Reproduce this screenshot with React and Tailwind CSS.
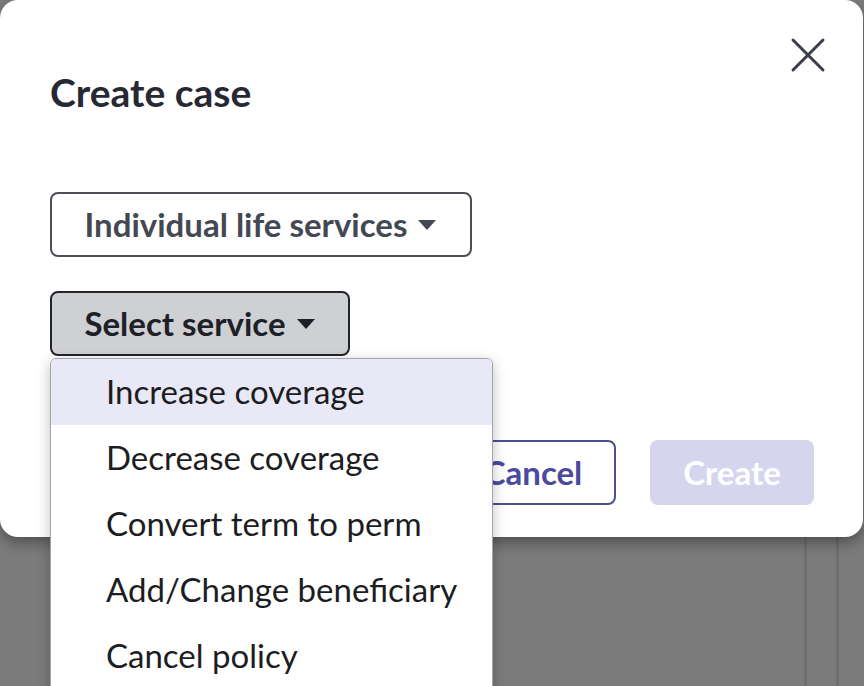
import React from "react";

function Caret({ className }) {
  return (
    <svg width="20" height="12" viewBox="0 0 20 12" className={className}>
      <path d="M1 1 L19 1 L10 11 Z" fill="currentColor" />
    </svg>
  );
}

export default function App() {
  const items = [
    "Increase coverage",
    "Decrease coverage",
    "Convert term to perm",
    "Add/Change beneficiary",
    "Cancel policy",
  ];
  return (
    <div
      className="relative w-[864px] h-[686px] overflow-hidden bg-[#7b7b7b]"
      style={{ fontFamily: "Lato, 'Open Sans', sans-serif" }}
    >
      {/* background panel lines */}
      <div className="absolute left-[804px] top-0 h-full w-[3px] bg-[#6e6e6e]" />
      <div className="absolute left-[836px] top-0 h-full w-[3px] bg-[#6e6e6e]" />

      {/* dialog */}
      <div className="relative w-[863px] h-[537px] bg-white rounded-[18px] shadow-[0_6px_14px_rgba(0,0,0,0.35)] px-[50px] pt-[66px]">
        <button className="absolute left-[790px] top-[37px] w-[36px] h-[36px] text-[#3a3d45]">
          <svg viewBox="0 0 36 36" width="36" height="36">
            <path d="M3 3 L33 33 M33 3 L3 33" stroke="currentColor" strokeWidth="3" strokeLinecap="round" />
          </svg>
        </button>
        <h1 className="text-[39px] leading-[52px] font-bold text-[#262833]">
          Create case
        </h1>
        <div className="mt-[74px] flex">
          <button className="h-[65px] w-[422px] flex items-center justify-center gap-[10px] border-2 border-[#4b4f57] rounded-[8px] text-[33px] font-bold text-[#434853]">
            <span>Individual life services</span>
            <Caret className="text-[#434853]" />
          </button>
        </div>
        <div className="mt-[34px] flex">
          <button className="h-[65px] w-[300px] flex items-center justify-center gap-[10px] border-2 border-[#23252b] rounded-[8px] bg-[#cfd0d4] text-[33px] font-bold text-[#1e2027]">
            <span>Select service</span>
            <Caret className="text-[#1e2027]" />
          </button>
        </div>
        <div className="mt-[84px] flex justify-end gap-[34px] mr-[-1px]">
          <button className="h-[65px] w-[166px] border-2 border-[#4d4f8c] rounded-[8px] text-[33px] font-bold text-[#4a4aa0]">
            Cancel
          </button>
          <button className="h-[65px] w-[164px] rounded-[8px] bg-[#d6d5ee] text-[33px] font-bold text-white">
            Create
          </button>
        </div>
      </div>

      {/* dropdown menu */}
      <div className="absolute left-[50px] top-[358px] w-[443px] h-[340px] bg-white border border-[#a3a5ad] rounded-t-[6px] shadow-[0_4px_14px_rgba(0,0,0,0.25)] overflow-hidden">
        {items.map((it, i) => (
          <div
            key={it}
            className={
              "h-[66px] flex items-center pl-[55px] text-[33px] text-[#1c1d22] " +
              (i === 0 ? "bg-[#e9e8f7]" : "")
            }
          >
            {it}
          </div>
        ))}
      </div>
    </div>
  );
}
